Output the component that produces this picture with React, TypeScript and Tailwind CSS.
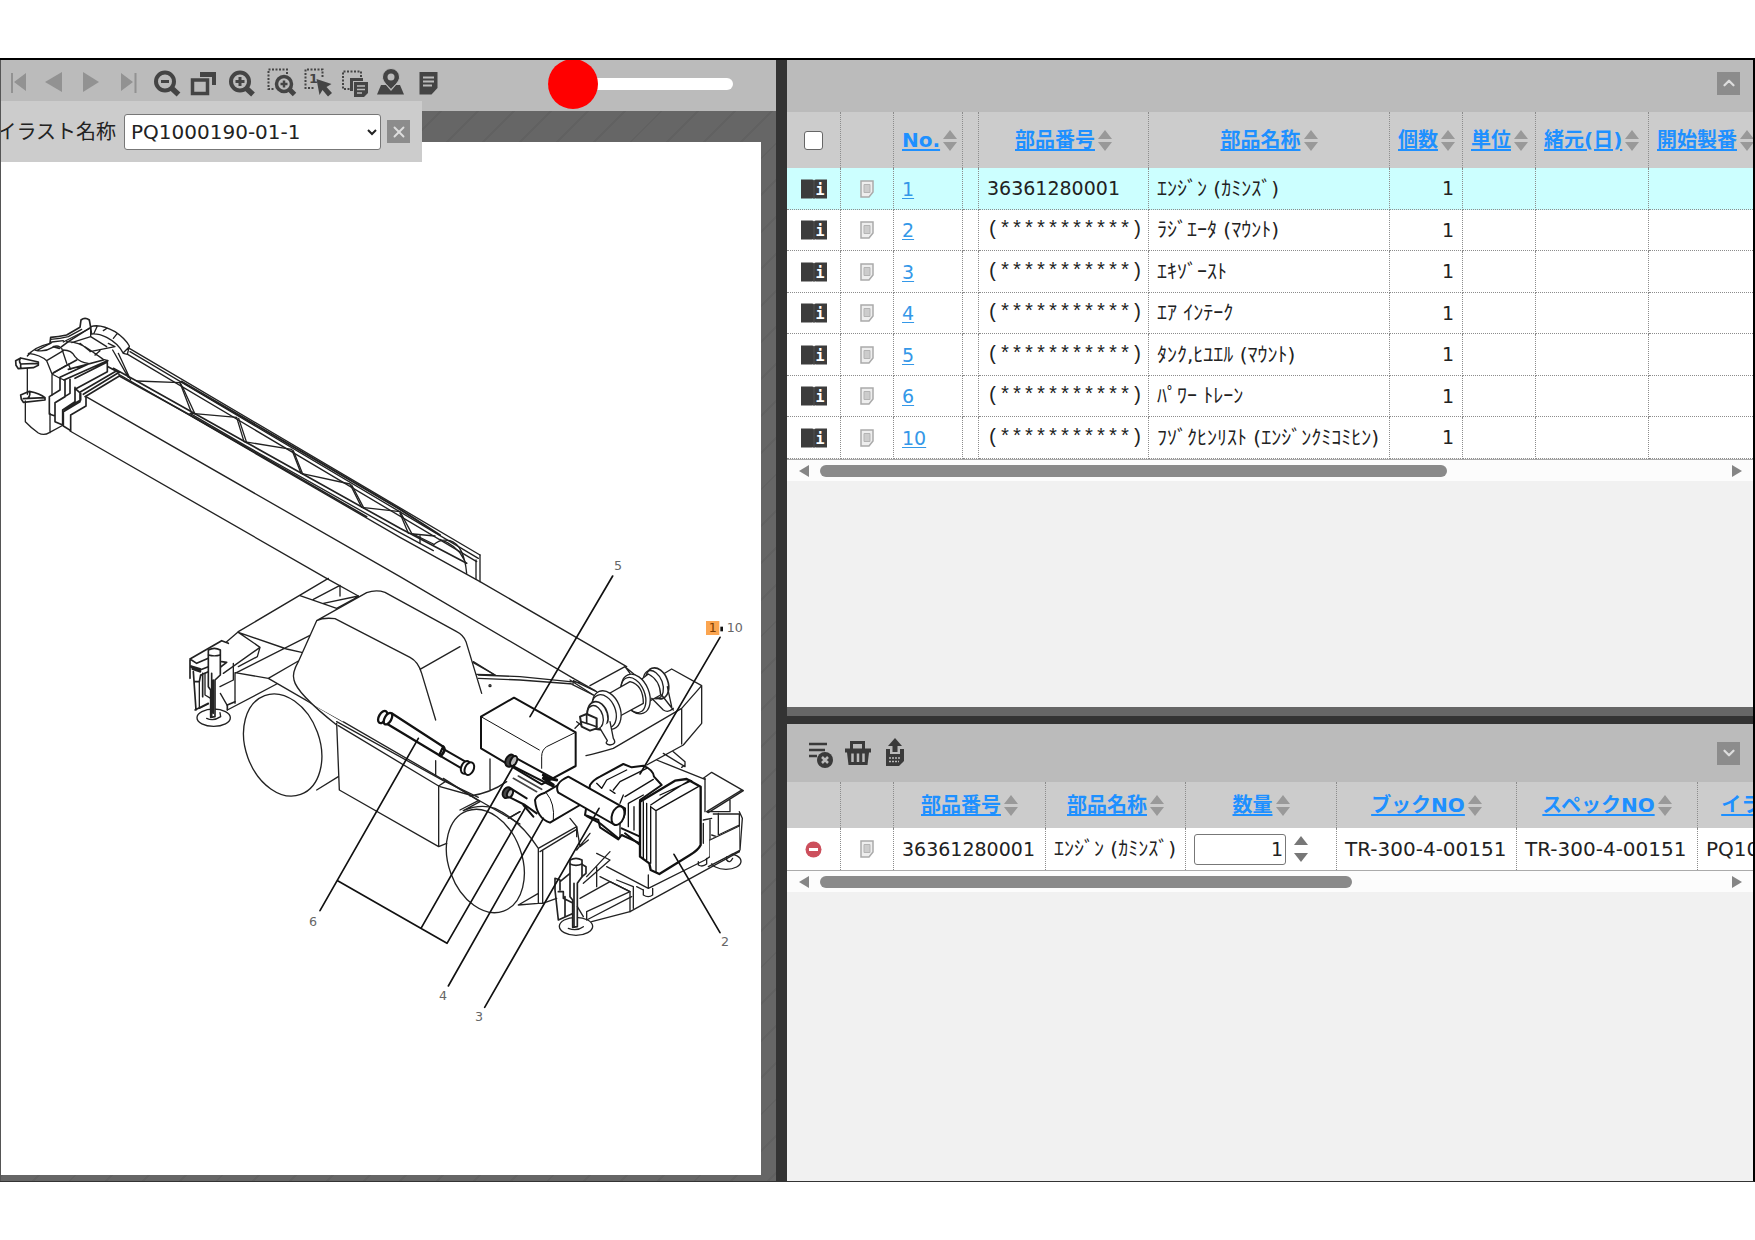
import React, { useState } from "react";
import { ChevronDown, ChevronUp, X } from "lucide-react";
import { clsx } from "clsx";

type Part = {
  no: string;
  partNo: string;
  name: string;
  qty: number;
};

const parts: Part[] = [
  { no: "1", partNo: "36361280001", name: "ｴﾝｼﾞﾝ (ｶﾐﾝｽﾞ)", qty: 1 },
  { no: "2", partNo: "(***********)", name: "ﾗｼﾞｴｰﾀ (ﾏｳﾝﾄ)", qty: 1 },
  { no: "3", partNo: "(***********)", name: "ｴｷｿﾞｰｽﾄ", qty: 1 },
  { no: "4", partNo: "(***********)", name: "ｴｱ ｲﾝﾃｰｸ", qty: 1 },
  { no: "5", partNo: "(***********)", name: "ﾀﾝｸ,ﾋﾕｴﾙ (ﾏｳﾝﾄ)", qty: 1 },
  { no: "6", partNo: "(***********)", name: "ﾊﾟﾜｰ ﾄﾚｰﾝ", qty: 1 },
  { no: "10", partNo: "(***********)", name: "ﾌｿﾞｸﾋﾝﾘｽﾄ (ｴﾝｼﾞﾝｸﾐｺﾐﾋﾝ)", qty: 1 },
];

const cell = "border-r border-b border-dotted border-[#8c8c8c] px-2 whitespace-nowrap";
const headCell = "border-r border-dotted border-[#8c8c8c] px-2 whitespace-nowrap";

// Toolbar icons, all on a 37 x 51 box
const navIcons = [
  {
    label: "最初のページ",
    disabled: true,
    icon: <path fill="currentColor" d="M10 13h2v20h-2zM25 13v18l-12-9z" />,
  },
  {
    label: "前のページ",
    disabled: true,
    icon: <path fill="currentColor" d="M24 12v20L7 22z" />,
  },
  {
    label: "次のページ",
    disabled: true,
    icon: <path fill="currentColor" d="M8 12v20l16-10z" />,
  },
  {
    label: "最後のページ",
    disabled: true,
    icon: <path fill="currentColor" d="M9 13v18l12-9zM22.500 13h2v20h-2z" />,
  },
  {
    label: "縮小",
    icon: (
      <>
        <circle cx="16" cy="21.500" r="9" fill="none" stroke="currentColor" strokeWidth="4" />
        <path fill="none" stroke="currentColor" strokeWidth="3" d="M12 21.500h8" />
        <path fill="none" stroke="currentColor" strokeWidth="5.500" d="M23 28.500l6.500 6" />
      </>
    ),
  },
  {
    label: "全体表示",
    icon: (
      <>
        <path fill="none" stroke="currentColor" strokeWidth="3.500" d="M6.500 20h15v13.500h-15z" />
        <path fill="currentColor" d="M14 12h16v13h-4v-8H14z" />
      </>
    ),
  },
  {
    label: "拡大",
    icon: (
      <>
        <circle cx="17" cy="21.500" r="9" fill="none" stroke="currentColor" strokeWidth="4" />
        <path fill="none" stroke="currentColor" strokeWidth="3" d="M12.500 21.500h9M17 17v9" />
        <path fill="none" stroke="currentColor" strokeWidth="5.500" d="M23.500 28.500l6.500 6" />
      </>
    ),
  },
  {
    label: "範囲拡大",
    icon: (
      <>
        <path fill="none" stroke="currentColor" strokeWidth="2" strokeDasharray="2 1.500" d="M27 14V9.500H8.500V29H15" />
        <circle cx="24" cy="24" r="7.500" fill="none" stroke="currentColor" strokeWidth="3.500" />
        <path fill="none" stroke="currentColor" strokeWidth="2.500" d="M20.500 24h7M24 20.500v7" />
        <path fill="none" stroke="currentColor" strokeWidth="5" d="M29.500 29.500l5 5" />
      </>
    ),
  },
  {
    label: "番号選択",
    icon: (
      <>
        <path fill="none" stroke="currentColor" strokeWidth="2" strokeDasharray="2 1.500" d="M25.500 17V9.500H8.500V28H18" />
        <text x="12" y="23" fill="currentColor" className="font-['DejaVu_Sans'] text-[13px] font-bold">
          1
        </text>
        <path fill="currentColor" d="M19.500 19l15 5-5 3 5.500 6-4 3.500-5.500-6.500-3 5z" />
      </>
    ),
  },
  {
    label: "範囲コピー",
    icon: (
      <>
        <path fill="none" stroke="currentColor" strokeWidth="2" strokeDasharray="2 1.500" d="M27 17V11.500H9V29h7" />
        <path fill="currentColor" d="M16 18h13v3H19v10h-3z" />
        <path fill="currentColor" d="M20 22h14v11l-4 4H20z" />
        <path fill="none" stroke="#bbb" strokeWidth="1.500" d="M23 26h8M23 29.500h8M23 33h5" />
      </>
    ),
  },
  {
    label: "位置表示",
    icon: (
      <>
        <path fill="currentColor" d="M6 34.500l4-9.500h5l5 6 5-6h4l4 9.500z" />
        <path
          fill="currentColor"
          stroke="#bbb"
          strokeWidth="1"
          d="M20 29.500c-4-4.500-8.500-8-8.500-12.500a8.500 8.500 0 0 1 17 0c0 4.500-4.500 8-8.500 12.500z"
        />
        <circle cx="20" cy="17" r="3.500" fill="#bbb" />
      </>
    ),
  },
  {
    label: "メモ",
    icon: (
      <>
        <path fill="currentColor" d="M11.500 12h18v16l-6 6.500h-12z" />
        <path fill="none" stroke="#bbb" strokeWidth="2" d="M15 17.500h11M15 21.500h11M15 25.500h9" />
      </>
    ),
  },
];

const listIcons = [
  {
    label: "リストをクリア",
    icon: (
      <>
        <path fill="none" stroke="currentColor" strokeWidth="2.500" d="M8 20h18M8 26h16M8 32h8" />
        <circle cx="24" cy="36" r="8" fill="currentColor" />
        <path fill="none" stroke="#bbb" strokeWidth="2.500" d="M21 33l6 6M27 33l-6 6" />
      </>
    ),
  },
  {
    label: "バスケット",
    icon: (
      <>
        <path fill="none" stroke="currentColor" strokeWidth="3" d="M13.500 26v-7.500h12V26" />
        <path fill="currentColor" d="M7 24.500h26v4h-2L29.500 41h-19L9 28.500H7z" />
        <path fill="none" stroke="#bbb" strokeWidth="2.500" d="M14.500 29.500V38M20 29.500V38M25.500 29.500V38" />
      </>
    ),
  },
  {
    label: "出力",
    icon: (
      <>
        <path fill="currentColor" d="M20 14l7 8h-4.500v6h-5v-6H13z" />
        <path fill="currentColor" d="M11 25h4v5h10v-5h4v12l-5 5H11z" />
        <path fill="none" stroke="#bbb" strokeWidth="1.500" strokeDasharray="2 1" d="M14 34h12M14 37.500h10" />
      </>
    ),
  },
];

const SortIcon = () => (
  <svg viewBox="0 0 14 21" className="ml-[3px] h-[21px] w-3.5 shrink-0 text-[#999]" aria-hidden="true">
    <path fill="currentColor" d="M7 0l7 9H0zM0 12h14l-7 9z" />
  </svg>
);

const SortHead = ({ children, start }: { children: React.ReactNode; start?: boolean }) => (
  <div className={clsx("flex items-center", start ? "justify-start" : "justify-center")}>
    <a href="#" className="font-bold text-[#1e90ff] underline underline-offset-2">
      {children}
    </a>
    <SortIcon />
  </div>
);

const BookIcon = () => (
  <button type="button" aria-label="詳細情報" className="mx-auto block h-5 w-[26px]">
    <svg viewBox="0 0 26 20" className="h-5 w-[26px]">
      <path fill="#3c3c3c" d="M0 .5h11q1.500 0 2 1 .5-1 2-1h11v19H15q-1.500-.5-2 .5-.5-1-2-.5H0z" />
      <path stroke="#666" strokeWidth=".5" d="M13 2v17" />
      <text x="14.500" y="15.500" fill="#fff" className="font-['DejaVu_Sans_Mono'] text-[15px] font-bold">
        i
      </text>
    </svg>
  </button>
);

const MemoIcon = () => (
  <button type="button" aria-label="メモ" className="mx-auto block h-[18px] w-3.5">
    <svg viewBox="0 0 14 18" className="h-[18px] w-3.5">
      <path fill="#eee" stroke="#aaa" strokeWidth="1.500" d="M1 1h12v11l-4 5H1z" />
      <path fill="#ccc" stroke="#b4b4b4" d="M4 4.500h6v8H4z" />
    </svg>
  </button>
);

const ScrollBar = ({ thumb }: { thumb: string }) => (
  <div className="flex h-[22px] shrink-0 items-center border-t border-[#aaa] bg-[#fcfcfc]">
    <button type="button" aria-label="左へスクロール" className="flex w-[33px] justify-center">
      <svg viewBox="0 0 10 12" className="h-3 w-2.5 text-[#858585]">
        <path fill="currentColor" d="M10 0v12L0 6z" />
      </svg>
    </button>
    <div className="flex-1">
      <div className={clsx("h-3 rounded-full bg-[#8a8a8a]", thumb)} />
    </div>
    <button type="button" aria-label="右へスクロール" className="flex w-8 justify-center">
      <svg viewBox="0 0 10 12" className="h-3 w-2.5 text-[#858585]">
        <path fill="currentColor" d="M0 0v12l10-6z" />
      </svg>
    </button>
  </div>
);

const CraneDrawing = () => (
  <svg
    viewBox="3 426 2280 3099"
    className="block w-[760px] shrink-0"
    role="img"
    aria-label="PQ1000190-01-1"
    fill="none"
    stroke="#222"
    strokeWidth="4"
    strokeLinejoin="round"
    strokeLinecap="round"
  >
    {/* boom head */}
    <g transform="translate(0 900)">
      <path d="M82 168Q100 142 150 130M82 205V283M76 303V365Q95 385 115 399Q132 408 148 398L190 375M150 398V340" />
      <path d="M85 160Q122 165 140 182L156 222V285M105 150Q132 158 158 142Q170 135 178 140M110 152L155 128M140 182L190 152M156 222L205 192L212 208M156 222Q180 235 192 240" />
      <path d="M47 182L62 174L115 186V196L100 203L55 206L48 196ZM62 192L115 190M62 174Q55 182 62 192V204" strokeWidth="5" />
      <path d="M62 285L88 274Q120 280 135 293V300L70 307L64 298ZM70 296L135 293M88 274Q92 284 85 293" strokeWidth="5" />
      <path d="M150 130L152 112Q175 110 200 105L240 82L243 60Q255 50 268 60L272 82L205 125L178 145L160 140" strokeWidth="5" />
      <path d="M152 118Q180 116 205 110L245 88M190 126L272 84M155 126L190 122" />
      <path d="M272 80Q300 70 345 95Q375 115 388 138L382 163L370 160Q355 130 320 112Q295 100 275 102ZM310 92L322 84M340 115L352 100M272 84V108M282 100L292 78M370 158L388 140" />
      <path d="M200 125Q235 125 270 150L310 178L324 182M185 145Q195 175 200 190M190 150Q215 150 225 170Q240 188 265 190M215 128L272 110L320 140M240 130L272 155M270 155L345 140L325 130M285 165L300 152" />
      <path d="M192 240L322 182V215L225 268M225 235L322 186M205 208L310 180M180 232L265 192M160 218L230 180" strokeWidth="5" />
      <path d="M180 235V270L148 290V342L165 348V308L195 290V240M210 238V280L165 308V365L188 375V330L225 305V262M225 265L242 280V300L188 330M258 290V318L212 345V392L190 378V335L240 305V278" strokeWidth="5" />
      <path d="M242 275L350 212M255 290L358 228M250 283L355 218M324 200L358 218" strokeWidth="5" />
    </g>

    {/* boom and jib lattice */}
    <g transform="translate(0 900)">
      <path d="M210 393L985 838L1075 888M258 290L1200 830L1720 1135" />
      <path d="M355 222L1200 712L1440 845L1880 1100" />
      <path d="M340 205L410 243L735 425L1200 685L1400 790M358 228L570 345L1100 650" strokeWidth="5" />
      <path d="M570 340L735 436L1200 698L1300 752" strokeWidth="4" />
      <path d="M388 145L1440 765M390 155L1435 775M383 163L1430 785" strokeWidth="4" />
      <path d="M545 245L900 452L1200 628L1320 705" strokeWidth="6" />
      <path d="M338 150L385 232M355 160L392 240M410 243L540 248L575 340L710 352L732 425L875 448L903 520L1050 552L1085 622L1200 635L1235 700L1300 732" />
      <path d="M540 248L548 262L585 342M716 355L740 428M880 452L908 522M1055 555L1092 625M1200 640L1225 700" />
      <path d="M1440 765V845M1428 780V838M1300 735Q1320 715 1350 722Q1392 735 1400 820M1320 718Q1370 735 1390 775L1398 790M1260 705V730M1240 702L1305 708" />
    </g>

    {/* carrier frame, cab and rear outrigger */}
    <g transform="translate(510 1680)">
      <path d="M475 55L205 215M390 107L500 145M430 118L510 76V108M460 130L565 108M500 145L565 110" />
      <path d="M205 217L350 267L395 277M205 217L270 262L160 340M270 262L262 290L205 320M195 340L420 226M195 338L295 355L385 303M195 340V430M295 355L925 720L1050 792M320 372L172 450M205 215L170 245" />
      <path fill="#fff" d="M440 182Q460 172 495 176L720 292Q745 305 755 340L797 480M440 182L600 95Q620 90 645 97L860 215Q880 225 888 245L935 400M440 182L385 305Q365 340 372 360Q380 400 430 435L520 485" stroke="none" />
      <path d="M440 182Q460 172 495 176L720 292Q745 305 755 340L797 480M440 182L590 98Q618 88 645 97L860 215Q880 225 888 245L935 400M750 328L870 260M440 182L385 305Q365 340 372 360Q380 400 500 495" />
      <path d="M910 305L975 345M925 345L1050 350L1230 368M925 355L1050 360L1210 372M1200 370L1270 405M1210 362L1280 395" />
      <path d="M500 485L820 662L925 712M505 497L806 678M500 490L508 690L806 860V678L830 662M806 860L830 850M797 602V645M960 597V690M810 680L900 705M870 750L925 722M1015 775L1050 755M900 708Q960 700 1010 665" />
      <ellipse cx="338" cy="555" rx="111" ry="158" transform="rotate(-20 338 555)" />
      <path d="M440 690L505 650" />
      <path d="M60 297L155 242L175 250M60 297L80 310L115 295M155 305L170 307L140 330M60 300V355M60 318L90 330L115 320M70 335L78 450M92 345L88 365H75M92 345L115 335M75 450L115 430M172 450V435L195 425M98 340V410" strokeWidth="5" />
      <path d="M88 365V445L115 432M105 340V405L122 415M150 380L190 360M190 310V360" strokeWidth="4" />
      <ellipse cx="131" cy="473" rx="50" ry="26" />
      <path fill="#fff" d="M115 270Q133 260 151 270V345L135 360V470L122 472V390L115 380Z" strokeWidth="5" />
      <path d="M115 285Q133 290 151 285M151 400L172 437M110 475Q130 485 152 470L150 458" />
      <path d="M125 340V470M130 360V460" strokeWidth="5" />
      <path d="M65 320L90 328M68 326L90 334" strokeWidth="8" />
    </g>

    {/* front wheel and side panels */}
    <g transform="translate(1140 2220)">
      <ellipse cx="316" cy="363" rx="110" ry="160" transform="rotate(-20 316 363)" />
      <path d="M250 212Q300 190 345 205Q420 240 475 325V490L415 495M475 325L590 260V290M480 335L590 268M488 330V490L530 475M475 490H490M190 115L300 185M300 185L250 212M415 495L475 460M390 232L420 215" />
      <path d="M600 320L625 300M590 330L630 280M570 235L590 260L600 320M650 340L690 360L610 430M690 335L620 410M650 380V440M680 380L805 445L975 360L990 350V240M805 405V445M660 410L750 455V515L635 545" />
      <path d="M600 475L690 425L750 455L620 515M620 515V540L755 470M710 420L760 440M750 515L1078 335M760 440V505M770 440L790 450" />
      <path d="M790 450V465Q805 475 818 465V445M955 365V375Q968 382 980 372V355M970 240L995 235M970 250V310" />
      <path d="M970 115L995 97L1090 152L985 218L980 215L1085 150M975 115V215M1050 180V215H985M1015 220V285L1078 255M1000 222H1078V335M1078 215L1087 235L1080 330M995 285L1010 290L990 300" />
      <ellipse cx="1038" cy="364" rx="45" ry="24" />
      <path fill="#fff" stroke="none" d="M990 298L1078 258V330L990 372Z" />
      <path d="M990 300L1078 258M1078 332L985 380M1040 350V360Q1050 372 1058 355" />
      <ellipse cx="588" cy="559" rx="50" ry="27" />
      <path d="M525 415L540 420V450M525 415V450L535 540M535 455H550V475L580 490M535 540L580 520M555 470V530M600 370L618 380V400L600 415M540 425L570 400" strokeWidth="5" />
      <path fill="#fff" d="M570 360Q588 350 606 360V410L592 430V560L578 562V480L570 470Z" strokeWidth="5" />
      <path d="M570 372Q588 380 606 372M582 430V560" strokeWidth="5" />
      <path d="M592 500L610 530M565 565Q590 575 610 560" />
    </g>

    {/* winch and counterweight */}
    <g transform="translate(1140 1560)">
      <path d="M850 462L875 447L965 497V610L910 675L800 735M965 497L905 565V672M905 565L700 685Q650 700 618 707M850 700L915 740V725L880 695M915 735L905 742M830 720L975 778" />
      <path d="M630 497L735 440L765 465M290 463L345 465M280 428L345 465M735 440L750 460M570 480L640 525M580 475L645 512M600 610L585 625M590 605L610 620" />
      <circle cx="330" cy="497" r="3" />
      <ellipse cx="832" cy="490" rx="32" ry="48" transform="rotate(-20 832 490)" fill="#fff" strokeWidth="5" />
      <ellipse cx="820" cy="494" rx="28" ry="44" transform="rotate(-20 820 494)" />
      <path fill="#fff" d="M775 485L805 462Q840 480 842 525L800 548Z" />
      <path d="M845 525L880 570M815 535L850 570Q865 580 880 565M862 500L875 560" />
      <ellipse cx="767" cy="522" rx="40" ry="62" transform="rotate(-22 767 522)" fill="#fff" />
      <ellipse cx="760" cy="525" rx="34" ry="55" transform="rotate(-22 760 525)" />
      <path fill="#fff" d="M685 522L750 485Q790 495 790 550L720 588Z" />
      <ellipse cx="680" cy="570" rx="40" ry="60" transform="rotate(-22 680 570)" fill="#fff" />
      <ellipse cx="672" cy="574" rx="34" ry="52" transform="rotate(-22 672 574)" />
      <ellipse cx="653" cy="587" rx="30" ry="43" transform="rotate(-15 653 587)" fill="#fff" strokeWidth="5" />
      <ellipse cx="645" cy="592" rx="24" ry="36" transform="rotate(-15 645 592)" />
      <path fill="#fff" d="M600 590L620 582L650 595V625L630 632L605 620Z" strokeWidth="6" />
      <path d="M620 582V610L650 620M605 605L625 612" strokeWidth="5" />
      <path fill="#fff" d="M660 625L682 662Q672 672 690 675Q712 672 700 655L690 605" strokeWidth="4" />
    </g>

    {/* highlighted parts: tank, shafts, engine, radiator */}
    <g transform="translate(1140 1560)" stroke="#111" strokeWidth="6">
      <path fill="#fff" d="M303 590L402 533L587 637V738L485 793L303 685Z" />
      <path d="M303 590L478 690M587 637L500 680Q485 690 485 710V745" strokeWidth="3" />
      <path fill="#fff" d="M35 580L190 680L178 706L22 612Z" strokeWidth="7" />
      <path fill="#fff" d="M187 685L255 724L246 746L178 706Z" />
      <ellipse cx="8" cy="591" rx="11" ry="20" transform="rotate(30 8 591)" fill="#fff" strokeWidth="7" />
      <ellipse cx="24" cy="596" rx="10" ry="19" transform="rotate(30 24 596)" fill="#fff" strokeWidth="7" />
      <path d="M190 680Q200 690 182 708" strokeWidth="8" />
      <ellipse cx="257" cy="742" rx="13" ry="20" transform="rotate(25 257 742)" fill="#fff" />
      <ellipse cx="268" cy="746" rx="13" ry="20" transform="rotate(25 268 746)" fill="#fff" />
      <path d="M400 710L520 775M392 735L520 800" />
      <ellipse cx="390" cy="722" rx="13" ry="19" transform="rotate(25 390 722)" fill="#444" />
      <ellipse cx="401" cy="723" rx="9" ry="16" transform="rotate(25 401 723)" fill="#bbb" />
      <path d="M490 765L505 775L530 780M490 775L520 795" strokeWidth="9" />
      <path d="M400 775L470 815M415 768L485 808" stroke="#444" strokeWidth="5" />
      <path d="M392 805L440 835M385 830L435 855L470 880M430 855L460 890" />
      <ellipse cx="381" cy="818" rx="12" ry="17" transform="rotate(25 381 818)" fill="#444" />
      <ellipse cx="390" cy="820" rx="8" ry="13" transform="rotate(25 390 820)" fill="#bbb" />
    </g>
    <g transform="translate(1140 2220)" stroke="#111" strokeWidth="6">
      <path
        fill="#fff"
        d="M630 135Q640 120 660 110L730 72L755 82L790 77Q820 90 822 110L845 135L780 180V310L725 285L715 298L660 262L655 240L615 225Z"
      />
      <path d="M665 145L680 120L740 90M700 150L720 125L800 85M735 170L820 118M745 190L790 165M650 130L665 145M720 190L730 165M745 190V260M762 200V270M720 225V290M690 150L705 160" strokeWidth="4" />
      <path fill="#fff" d="M465 180Q470 165 495 158L560 120L600 195L510 248Q470 235 465 180Z" />
      <path d="M500 160Q525 190 520 240" strokeWidth="3" />
      <path fill="#fff" d="M565 110L735 205Q738 240 705 255L535 158Q520 130 565 110Z" />
      <ellipse cx="714" cy="227" rx="18" ry="29" transform="rotate(20 714 227)" fill="#fff" />
      <path d="M620 228L660 250L715 295M725 265L780 290M735 280L780 315" />
      <path fill="#fff" d="M780 185L885 122L920 117L962 140V315Q955 330 930 345L838 402L812 390L808 370L780 350Z" strokeWidth="7" />
      <path d="M790 185V355M800 190V360M812 200V370M828 212V395M812 200L828 212L955 140M812 195L850 170L930 120M840 165L935 122" strokeWidth="4" />
    </g>

    {/* leader lines */}
    <g stroke="#111" strokeWidth="5">
      <path d="M1838 1728L1590 2150M2160 1912L1920 2322" />
      <path d="M2022 2563L2160 2798M1797 2425L1454 3022M1630 2455L1345 2958" />
      <path d="M1255 2215L960 2732M1013 2642L1341 2830L1575 2425M1263 2785L1542 2295" />
    </g>

    {/* item numbers */}
    <g fill="#666" stroke="none" className="font-['DejaVu_Sans'] text-[38px]">
      <rect x="2118" y="1863" width="40" height="42" fill="#fba550" />
      <text x="1842" y="1709">5</text>
      <text x="2126" y="1896" fill="#7a3b00">1</text>
      <rect x="2161" y="1880" width="8" height="14" fill="#111" />
      <text x="2180" y="1896">10</text>
      <text x="2163" y="2838">2</text>
      <text x="1425" y="3063">3</text>
      <text x="1317" y="3001">4</text>
      <text x="927" y="2778">6</text>
    </g>
  </svg>
);

const IllustPane = () => {
  const [zoom, setZoom] = useState(0);

  return (
    <section className="relative flex min-h-0 flex-col overflow-hidden border-l border-[#555]">
      <div className="flex h-[51px] shrink-0 items-center bg-[#bbb]">
        {navIcons.map((item) => (
          <button
            key={item.label}
            type="button"
            aria-label={item.label}
            disabled={item.disabled}
            className={clsx("w-[37px] shrink-0", item.disabled ? "text-[#929292]" : "text-[#444]")}
          >
            <svg viewBox="0 0 37 51" className="h-[51px] w-[37px]">
              {item.icon}
            </svg>
          </button>
        ))}
        <input
          type="range"
          aria-label="表示倍率"
          min={0}
          max={100}
          value={zoom}
          onChange={(e) => setZoom(Number(e.target.value))}
          className="mb-1 ml-[103px] h-[50px] w-[185px] appearance-none bg-transparent [&::-webkit-slider-runnable-track]:h-3 [&::-webkit-slider-runnable-track]:rounded-full [&::-webkit-slider-runnable-track]:bg-white [&::-webkit-slider-thumb]:-mt-[19px] [&::-webkit-slider-thumb]:size-[50px] [&::-webkit-slider-thumb]:appearance-none [&::-webkit-slider-thumb]:rounded-full [&::-webkit-slider-thumb]:bg-[#f00]"
        />
      </div>

      <div className="min-h-0 flex-1 bg-[#666] bg-[repeating-linear-gradient(135deg,transparent_0_24px,#616161_24px_26px)] pt-[31px] pr-[15px] pb-1.5">
        <div className="h-full overflow-hidden bg-white">
          <CraneDrawing />
        </div>
      </div>

      {/* floating illustration picker */}
      <div className="absolute top-[41px] left-0 flex h-[61px] w-[421px] items-center justify-end overflow-hidden bg-[#ccc] pr-3">
        <label htmlFor="illust" className="mr-2 shrink-0 text-[20px] text-[#222]">
          イラスト名称
        </label>
        <select
          id="illust"
          className="h-9 w-[257px] shrink-0 rounded-[3px] border border-[#777] bg-white px-0.5 text-[20px] text-[#222]"
        >
          <option>PQ1000190-01-1</option>
        </select>
        <button
          type="button"
          aria-label="閉じる"
          className="ml-1.5 flex size-[23px] shrink-0 items-center justify-center bg-[#8c8c8c] text-[#ddd]"
        >
          <X size={18} strokeWidth={2.5} />
        </button>
      </div>
    </section>
  );
};

const PartsPane = () => (
  <section className="flex min-h-0 flex-[647_1_0%] flex-col overflow-hidden bg-[#f1f1f1]">
    <div className="flex h-[52px] shrink-0 items-center justify-end bg-[#bbb] pr-[13px] pb-1.5">
      <button type="button" aria-label="折りたたむ" className="flex size-[23px] items-center justify-center bg-[#8c8c8c] text-[#ddd]">
        <ChevronUp size={18} strokeWidth={3} />
      </button>
    </div>
    <div className="shrink-0 overflow-hidden">
      <table className="w-[982px] table-fixed border-separate border-spacing-0 text-[20px] text-[#222]">
        <colgroup>
          <col className="w-[54px]" />
          <col className="w-[53px]" />
          <col className="w-[69px]" />
          <col className="w-[16px]" />
          <col className="w-[170px]" />
          <col className="w-[241px]" />
          <col className="w-[73px]" />
          <col className="w-[73px]" />
          <col className="w-[113px]" />
          <col className="w-[120px]" />
        </colgroup>
        <thead>
          <tr className="h-14 bg-[#ccc]">
            <th className={headCell}>
              <input
                type="checkbox"
                aria-label="すべて選択"
                className="mx-auto block size-[19px] appearance-none rounded-[3px] border border-[#666] bg-white"
              />
            </th>
            <th className={headCell} />
            <th className={headCell}>
              <SortHead start>No.</SortHead>
            </th>
            <th className="border-r border-dotted border-[#8c8c8c]" />
            <th className={headCell}>
              <SortHead>部品番号</SortHead>
            </th>
            <th className={headCell}>
              <SortHead>部品名称</SortHead>
            </th>
            <th className={headCell}>
              <SortHead start>個数</SortHead>
            </th>
            <th className={headCell}>
              <SortHead start>単位</SortHead>
            </th>
            <th className={headCell}>
              <SortHead start>緒元(日)</SortHead>
            </th>
            <th className={headCell}>
              <SortHead start>開始製番</SortHead>
            </th>
          </tr>
        </thead>
        <tbody>
          {parts.map((part, i) => (
            <tr key={part.no} className={clsx("odd:h-[42px] even:h-[41px]", i === 0 ? "bg-[#ccffff]" : "bg-white")}>
              <td className={cell}>
                <BookIcon />
              </td>
              <td className={cell}>
                <MemoIcon />
              </td>
              <td className={cell}>
                <a href="#" className="text-[19px] text-[#3498e8] underline underline-offset-2">
                  {part.no}
                </a>
              </td>
              <td className="border-r border-b border-dotted border-[#8c8c8c]" />
              <td className={clsx(cell, part.partNo.startsWith("(") ? "font-['Liberation_Mono']" : "text-[19px]")}>
                {part.partNo}
              </td>
              <td className={cell}>{part.name}</td>
              <td className={clsx(cell, "text-right text-[19px]")}>{part.qty}</td>
              <td className={cell} />
              <td className={cell} />
              <td className={cell} />
            </tr>
          ))}
        </tbody>
      </table>
    </div>
    <ScrollBar thumb="w-[69.6%]" />
  </section>
);

const OrderPane = () => {
  const [qty, setQty] = useState(1);

  return (
    <section className="flex min-h-0 flex-[457_1_0%] flex-col overflow-hidden bg-[#f1f1f1]">
      <div className="flex h-[58px] shrink-0 items-center bg-[#bbb] pr-[13px] pl-3.5">
        {listIcons.map((item) => (
          <button key={item.label} type="button" aria-label={item.label} className="w-[37px] text-[#3a3a3a]">
            <svg viewBox="0 0 37 58" className="h-[58px] w-[37px]">
              {item.icon}
            </svg>
          </button>
        ))}
        <button
          type="button"
          aria-label="開く"
          className="ml-auto flex size-[23px] items-center justify-center bg-[#8c8c8c] text-[#ddd]"
        >
          <ChevronDown size={18} strokeWidth={3} />
        </button>
      </div>
      <div className="shrink-0 overflow-hidden">
        <table className="w-[1095px] table-fixed border-separate border-spacing-0 text-[20px] text-[#222]">
          <colgroup>
            <col className="w-[54px]" />
            <col className="w-[53px]" />
            <col className="w-[152px]" />
            <col className="w-[140px]" />
            <col className="w-[151px]" />
            <col className="w-[180px]" />
            <col className="w-[181px]" />
            <col className="w-[184px]" />
          </colgroup>
          <thead>
            <tr className="h-[46px] bg-[#ccc]">
              <th className={headCell} />
              <th className={headCell} />
              {["部品番号", "部品名称", "数量", "ブックNO", "スペックNO", "イラスト名称"].map((name) => (
                <th key={name} className={headCell}>
                  <SortHead>{name}</SortHead>
                </th>
              ))}
            </tr>
          </thead>
          <tbody>
            <tr className="h-[42px] bg-white">
              <td className={headCell}>
                <button type="button" aria-label="削除" className="mx-auto block size-[17px]">
                  <svg viewBox="0 0 17 17" className="size-[17px]">
                    <circle cx="8.500" cy="8.500" r="8" fill="#cc4f5c" />
                    <path fill="#fff" d="M4 7h9v3H4z" />
                  </svg>
                </button>
              </td>
              <td className={headCell}>
                <MemoIcon />
              </td>
              <td className={clsx(headCell, "text-[19px]")}>36361280001</td>
              <td className={headCell}>ｴﾝｼﾞﾝ (ｶﾐﾝｽﾞ)</td>
              <td className={headCell}>
                <div className="flex items-center gap-2">
                  <input
                    type="text"
                    aria-label="数量"
                    value={qty}
                    onChange={(e) => setQty(Number(e.target.value) || 0)}
                    className="h-[31px] w-[92px] rounded-[3px] border border-[#777] bg-white px-0.5 text-right text-[19px]"
                  />
                  <div className="flex flex-col gap-2 text-[#777]">
                    <button type="button" aria-label="増やす" onClick={() => setQty(qty + 1)}>
                      <svg viewBox="0 0 14 9" className="block h-[9px] w-3.5">
                        <path fill="currentColor" d="M7 0l7 9H0z" />
                      </svg>
                    </button>
                    <button type="button" aria-label="減らす" onClick={() => setQty(Math.max(0, qty - 1))}>
                      <svg viewBox="0 0 14 9" className="block h-[9px] w-3.5">
                        <path fill="currentColor" d="M0 0h14L7 9z" />
                      </svg>
                    </button>
                  </div>
                </div>
              </td>
              <td className={headCell}>TR-300-4-00151</td>
              <td className={headCell}>TR-300-4-00151</td>
              <td className={headCell}>PQ1000190-01-1</td>
            </tr>
          </tbody>
        </table>
      </div>
      <ScrollBar thumb="w-[59%]" />
    </section>
  );
};

export default function App() {
  return (
    <div className="h-screen bg-white py-[58px] font-['DejaVu_Sans','Noto_Sans_CJK_JP',sans-serif]">
      <main className="grid h-full grid-cols-[minmax(0,776fr)_11px_minmax(0,966fr)] grid-rows-[minmax(0,1fr)] border-t-2 border-r-2 border-b border-t-black border-r-black border-b-[#333]">
        <IllustPane />
        <div className="bg-[#333]" />
        <div className="flex min-h-0 flex-col">
          <PartsPane />
          <div className="h-[17px] shrink-0 border-t-[9px] border-[#666] bg-[#333]" />
          <OrderPane />
        </div>
      </main>
    </div>
  );
}
